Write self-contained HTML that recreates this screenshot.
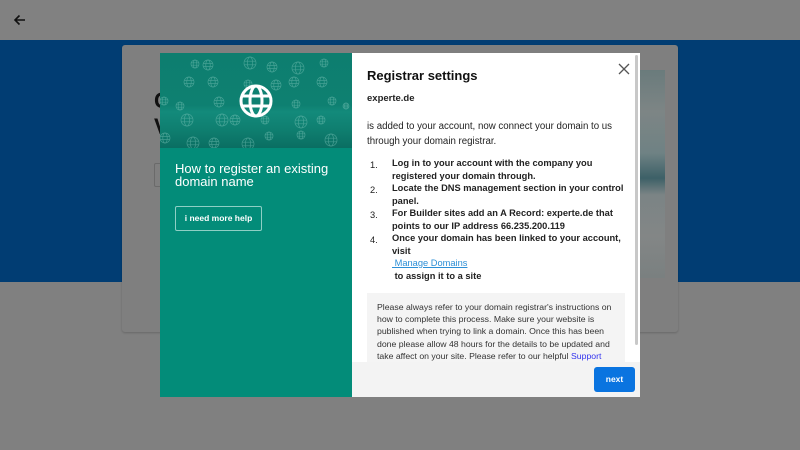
<!DOCTYPE html>
<html><head><meta charset="utf-8"><style>
*{margin:0;padding:0;box-sizing:border-box}
body{width:800px;height:450px;overflow:hidden;background:#808080;font-family:"Liberation Sans",sans-serif;position:relative}
.top{position:absolute;left:0;top:0;width:800px;height:40px;background:#818181}
.band{position:absolute;left:0;top:40px;width:800px;height:242px;background:#013d73}
.card{position:absolute;left:122px;top:45px;width:556px;height:287px;background:#7f7f7f;border-radius:3px;box-shadow:0 1px 2px rgba(0,0,0,.2)}
.img{position:absolute;left:640px;top:70px;width:25px;height:208px;background:linear-gradient(#6a7b7c,#7d8585 20%,#6f8284 40%,#3d6067 52%,#7b8485 60%,#838686 80%,#7a8080)}
.modal{position:absolute;left:160px;top:53px;width:480px;height:344px;background:#fff;overflow:hidden}
.left{position:absolute;left:0;top:0;width:192px;height:344px;background:#038c79}
.hdr{position:absolute;left:0;top:0;width:192px;height:95px;background:linear-gradient(#0d7e6f 0%,#0e8071 55%,#138a7b 62%,#0f7f70 80%,#0a6e62 100%)}
.ltitle{position:absolute;left:15px;top:110px;width:175px;color:#fff;font-size:13px;line-height:12.5px}
.help{position:absolute;left:15px;top:153px;width:87px;height:25px;border:1px solid #8fcfc5;border-radius:2px;color:#fff;font-size:8.5px;font-weight:bold;text-align:center;line-height:23px}
.right{position:absolute;left:192px;top:0;width:288px;height:344px;color:#222}
h2{position:absolute;left:15px;top:15px;font-size:13px;font-weight:bold;color:#111}
.dom{position:absolute;left:15px;top:40px;font-size:9.5px;font-weight:bold}
.p{position:absolute;left:15px;top:66px;width:265px;font-size:9.7px;line-height:15px}
ol{position:absolute;left:18px;top:104px;width:260px;list-style:none;font-size:9.3px;font-weight:bold;line-height:12.5px}
ol li{position:relative;padding-left:22px}
ol li span.n{position:absolute;left:0;top:2px;font-weight:normal}
a{color:#2c8fd6}
.note{position:absolute;left:15px;top:240px;width:258px;height:80px;background:#f4f4f4;font-size:8.7px;line-height:12.2px;padding:8px 10px;color:#333;overflow:hidden}
.note b{color:#3333ee;font-weight:normal}
.foot{position:absolute;left:0;top:309px;width:288px;height:35px;background:#f3f3f3}
.next{position:absolute;left:242px;top:5px;width:41px;height:25px;background:#0a74e0;border-radius:3px;color:#fff;font-size:8.5px;font-weight:bold;text-align:center;line-height:25px}
.sb{position:absolute;left:283px;top:2px;width:3px;height:290px;background:#c8c8c8;border-radius:2px}
.x{position:absolute;left:266px;top:10px}
.bg{position:absolute;color:#111;font-size:22px;font-weight:bold}
</style></head><body>
<div class="top"><svg style="position:absolute;left:13px;top:13px" width="14" height="14" viewBox="0 0 14 14"><path d="M12 7H2M6.5 2.5L2 7l4.5 4.5" stroke="#111" stroke-width="1.6" fill="none"/></svg></div>
<div class="band"></div>
<div class="card"></div>
<div class="bg" style="left:154px;top:88px">C</div>
<div class="bg" style="left:154px;top:114px">V</div>
<div class="img"></div>
<div style="position:absolute;left:154px;top:163px;width:8px;height:24px;border:1px solid #6a6a6a;border-radius:2px"></div>
<div class="modal">
<div class="left">
<div class="hdr"><svg width="192" height="95" viewBox="0 0 192 95" fill="none" stroke="#7cc4b8" stroke-width=".7" opacity=".5" id="g"></svg>
<svg style="position:absolute;left:79px;top:31px" width="34" height="34" viewBox="0 0 34 34" fill="none" stroke="#fff" stroke-width="3"><circle cx="17" cy="17" r="15"/><ellipse cx="17" cy="17" rx="6" ry="15"/><path d="M3 12h28M3 22h28"/></svg>
</div>
<div class="ltitle">How to register an existing domain name</div>
<div class="help">i need more help</div>
</div>
<div class="right">
<h2>Registrar settings</h2>
<div class="dom">experte.de</div>
<div class="p">is added to your account, now connect your domain to us through your domain registrar.</div>
<ol>
<li><span class="n">1.</span>Log in to your account with the company you registered your domain through.</li>
<li><span class="n">2.</span>Locate the DNS management section in your control panel.</li>
<li><span class="n">3.</span>For Builder sites add an A Record: experte.de that points to our IP address 66.235.200.119</li>
<li><span class="n">4.</span>Once your domain has been linked to your account, visit<br><a style="font-weight:normal" href="#">&nbsp;Manage Domains</a><br>&nbsp;to assign it to a site</li>
</ol>
<div class="note">Please always refer to your domain registrar's instructions on how to complete this process. Make sure your website is published when trying to link a domain. Once this has been done please allow 48 hours for the details to be updated and take affect on your site. Please refer to our helpful <b>Support</b></div>
<div class="foot"><div class="next">next</div></div>
<div class="sb"></div>
<svg class="x" width="12" height="12" viewBox="0 0 12 12"><path d="M1 1l10 10M11 1L1 11" stroke="#555" stroke-width="1.3"/></svg>
</div>
</div>
<script>
var p=[[35,11,4],[48,12,5],[90,10,6],[112,14,5],[138,15,6],[164,10,4],[29,29,5],[53,29,5],[88,31,4],[116,32,5],[134,29,5],[162,29,5],[4,48,4],[20,53,4],[59,49,5],[136,51,4],[172,48,4],[186,53,3],[27,67,6],[62,67,6],[75,67,5],[105,67,4],[141,69,6],[161,67,4],[5,85,5],[33,90,6],[54,90,5],[88,91,6],[109,83,4],[141,82,4],[171,87,6]];
var s='';p.forEach(function(c){var x=c[0],y=c[1],r=c[2];s+='<circle cx="'+x+'" cy="'+y+'" r="'+r+'"/><ellipse cx="'+x+'" cy="'+y+'" rx="'+r*0.45+'" ry="'+r+'"/><path d="M'+(x-r)+' '+(y-r*0.3)+'h'+2*r+'M'+(x-r)+' '+(y+r*0.3)+'h'+2*r+'"/>';});
document.getElementById('g').innerHTML=s;
</script>
</body></html>
